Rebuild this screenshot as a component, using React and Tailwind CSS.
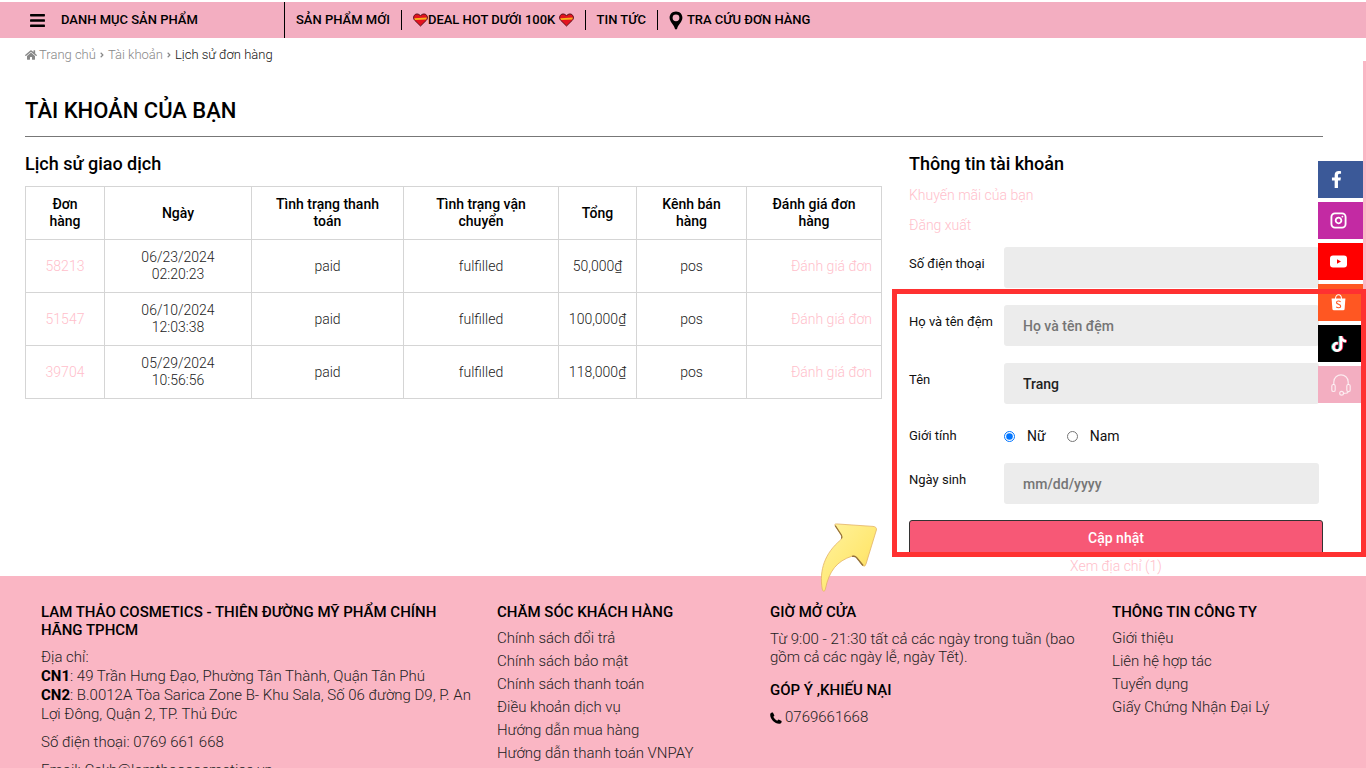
import React, { useState } from 'react';
import { FaBars, FaHome, FaFacebookF, FaTiktok, FaPhoneAlt, FaAngleRight } from 'react-icons/fa';
import { Instagram } from 'lucide-react';

const orders = [
    { id: '58213', date: '06/23/2024', time: '02:20:23', payment: 'paid', shipping: 'fulfilled', total: '50,000₫', channel: 'pos' },
    { id: '51547', date: '06/10/2024', time: '12:03:38', payment: 'paid', shipping: 'fulfilled', total: '100,000₫', channel: 'pos' },
    { id: '39704', date: '05/29/2024', time: '10:56:56', payment: 'paid', shipping: 'fulfilled', total: '118,000₫', channel: 'pos' },
];

const columns = [
    { title: 'Đơn hàng', width: 'w-[79px]' },
    { title: 'Ngày', width: 'w-[147px]' },
    { title: 'Tình trạng thanh toán', width: 'w-[152px]' },
    { title: 'Tình trạng vận chuyển', width: 'w-[155px]' },
    { title: 'Tổng', width: 'w-[78px]' },
    { title: 'Kênh bán hàng', width: 'w-[110px]' },
    { title: 'Đánh giá đơn hàng', width: 'w-[135px]' },
];

const supportLinks = [
    'Chính sách đổi trả',
    'Chính sách bảo mật',
    'Chính sách thanh toán',
    'Điều khoản dịch vụ',
    'Hướng dẫn mua hàng',
    'Hướng dẫn thanh toán VNPAY',
    'Vận chuyển',
];

const companyLinks = ['Giới thiệu', 'Liên hệ hợp tác', 'Tuyển dụng', 'Giấy Chứng Nhận Đại Lý'];

const HeartIcon = () => (
    <svg className="w-[15px] h-[14px]" viewBox="0 0 15 14">
        <path d="M7.5 13 L1.4 7 C-0.4 4.6 1 1 4 1 C5.6 1 6.8 1.8 7.5 3 C8.2 1.8 9.4 1 11 1 C14 1 15.4 4.6 13.6 7 Z" fill="#e3131f" stroke="#5d1019" strokeWidth="1" />
        <path d="M1.2 5.2 L13.8 4.6 L13.4 6.4 L2 7 Z" fill="#f8b21c" />
    </svg>
);

const PinIcon = () => (
    <svg className="w-[14px] h-[19px]" viewBox="0 0 14 19">
        <path fillRule="evenodd" d="M7 0.5 C3 0.5 0.6 3.4 0.6 6.8 C0.6 11 5 13.4 5.8 17.6 Q7 19.4 8.2 17.6 C9 13.4 13.4 11 13.4 6.8 C13.4 3.4 11 0.5 7 0.5 Z M7 3.4 A3.4 3.4 0 1 1 7 10.2 A3.4 3.4 0 1 1 7 3.4 Z" fill="#000" />
    </svg>
);

const YoutubeIcon = () => (
    <svg className="w-[17px] h-[13px]" viewBox="0 0 17 13">
        <rect x="0" y="0.5" width="17" height="12" rx="3" fill="#fff" />
        <path d="M7 4.2 L11 6.5 L7 8.8 Z" fill="#f00" />
    </svg>
);

const ShopeeIcon = () => (
    <svg className="w-[15px] h-[17px]" viewBox="0 0 15 17">
        <path d="M4.5 5 C4.5 -0.6 10.5 -0.6 10.5 5" fill="none" stroke="#fff" strokeWidth="1.1" />
        <path d="M0.6 4.6 H14.4 L13.6 15 Q13.5 16.3 12.2 16.3 H2.8 Q1.5 16.3 1.4 15 Z" fill="#fff" />
        <path d="M9.6 7.8 C8.4 6.6 5.4 6.7 5.5 8.6 C5.6 10.6 9.7 10.1 9.7 12.2 C9.7 14.2 6.5 14.2 5.2 12.9" fill="none" stroke="#ff5722" strokeWidth="1.1" />
    </svg>
);

const TiktokIcon = () => (
    <span className="relative block w-4 h-4">
        <FaTiktok className="absolute -left-px top-0 text-[#25f4ee] opacity-70" size={16} />
        <FaTiktok className="absolute left-px top-0 text-[#fe2c55]" size={16} />
        <FaTiktok className="absolute left-0 top-0 text-white" size={16} />
    </span>
);

const HeadsetIcon = () => (
    <svg className="w-5 h-[22px]" viewBox="0 0 20 22" fill="none" stroke="#fff" strokeOpacity="0.75" strokeWidth="1.2">
        <path d="M2.8 11 V8 C2.8 -1.4 17.2 -1.4 17.2 8 V11" />
        <rect x="0.8" y="10.5" width="3.4" height="7" rx="1.6" />
        <rect x="15.8" y="10.5" width="3.4" height="7" rx="1.6" />
        <path d="M17.2 17.5 C17.2 19.3 15 19.4 12.6 19.4" />
        <circle cx="10.6" cy="19.2" r="1.9" />
    </svg>
);

const socials = [
    { name: 'Facebook', bg: 'bg-[#3b5998] pr-2', icon: <FaFacebookF size={17} /> },
    { name: 'Instagram', bg: 'bg-[#c32aa3] pr-1', icon: <Instagram size={17} strokeWidth={2.6} /> },
    { name: 'Youtube', bg: 'bg-[#ff0000] pr-1', icon: <YoutubeIcon /> },
    { name: 'Shopee', bg: 'bg-[#ff5722] pr-1', icon: <ShopeeIcon /> },
    { name: 'Tiktok', bg: 'bg-black pr-1', icon: <TiktokIcon /> },
    { name: 'Hỗ trợ', bg: 'bg-[#f3aec1]', icon: <HeadsetIcon /> },
];

const Arrow = () => (
    <svg className="absolute z-20 -left-[89px] bottom-[-17px] w-[58px] h-[70px]" viewBox="0 0 58 70">
        <defs>
            <linearGradient id="arrowFill" x1="0" y1="0" x2="1" y2="1">
                <stop offset="0" stopColor="#fff3a0" />
                <stop offset="0.6" stopColor="#ffe873" />
                <stop offset="1" stopColor="#f8d25c" />
            </linearGradient>
        </defs>
        <path
            d="M15 2.4 C14 1 16 0.8 18 1 L53 3.4 Q57 3.8 56.4 7 L46 41 Q45 44.5 42.5 42.5 L36.5 34.5 C35.4 32.8 34 32.6 32 33.2 C17 38 9 48 5.4 66 C4.6 69 3 69 2.2 66 C-1 47 5 30 20.6 17 C22.4 15 22 13.8 21 12 Z"
            fill="url(#arrowFill)"
            stroke="#e3b266"
            strokeWidth="0.8"
        />
        <path d="M15.2 2.6 L21.4 12 Q22.4 14 21.4 15.6" fill="none" stroke="#94713a" strokeWidth="1.2" />
        <path d="M32 33.4 Q35 32.6 36.6 34.6 L43 42.4" fill="none" stroke="#94713a" strokeWidth="1.5" />
    </svg>
);

const Field = ({ id, label, ...props }) => (
    <div className="flex pr-1">
        <label htmlFor={id} className="w-[95px] shrink-0 pt-[7px] text-[13px] leading-5 text-[#111]">{label}</label>
        <input
            id={id}
            className="flex-1 min-w-0 h-[41px] rounded-[3px] bg-[#ececec] px-[19px] text-sm font-medium text-[#222] placeholder:text-[#757575] outline-none"
            {...props}
        />
    </div>
);

const FooterTitle = ({ children }) => (
    <h4 className="text-[15px] leading-[18px] font-medium text-black">{children}</h4>
);

const App = () => {
    const [name, setName] = useState('Trang');
    const [gender, setGender] = useState('female');

    return (
        <div className="min-h-screen overflow-hidden bg-white font-['Roboto',sans-serif] font-normal">
            {/* Top navigation */}
            <header className="mt-0.5 flex h-9 items-center bg-[#f3aec1] text-[13px] font-medium text-black">
                <button type="button" className="flex h-full w-[285px] items-center gap-[15px] border-r border-black pl-[29px]">
                    <FaBars size={17} />
                    DANH MỤC SẢN PHẨM
                </button>
                <nav className="flex items-center">
                    <a href="#new" className="px-[11px]">SẢN PHẨM MỚI</a>
                    <a href="#deal" className="flex items-center border-l border-black px-[11px]">
                        <HeartIcon />
                        DEAL HOT DƯỚI 100K&nbsp;
                        <HeartIcon />
                    </a>
                    <a href="#news" className="border-l border-black px-[11px]">TIN TỨC</a>
                    <a href="#tracking" className="flex items-center gap-1 border-l border-black pl-[11px]">
                        <PinIcon />
                        TRA CỨU ĐƠN HÀNG
                    </a>
                </nav>
            </header>

            <main className="pl-[25px] pr-[43px]">
                <nav className="mt-[7px] flex items-center gap-0.5 text-[13px] leading-5 font-light text-[#888]">
                    <FaHome size={12} />
                    <a href="#home">Trang chủ</a>
                    <FaAngleRight size={8} />
                    <a href="#account">Tài khoản</a>
                    <FaAngleRight size={8} />
                    <span className="text-[#111]">Lịch sử đơn hàng</span>
                </nav>

                <h1 className="mt-[31px] border-b border-[#777] pb-[10px] text-[22px] leading-[30px] font-medium text-black">
                    TÀI KHOẢN CỦA BẠN
                </h1>

                <div className="mt-[15px] grid grid-cols-[856fr_415fr] gap-x-[27px]">
                    {/* Order history */}
                    <section>
                        <h2 className="text-lg leading-6 font-medium text-black">Lịch sử giao dịch</h2>
                        <table className="mt-[10px] w-full table-fixed border-collapse text-center text-sm leading-[17px] text-[#222]">
                            <thead>
                                <tr className="h-[53px]">
                                    {columns.map(col => (
                                        <th key={col.title} className={`border border-[#d5d5d5] px-4 font-medium text-black ${col.width}`}>
                                            {col.title}
                                        </th>
                                    ))}
                                </tr>
                            </thead>
                            <tbody className="font-light">
                                {orders.map(order => (
                                    <tr key={order.id} className="h-[53px]">
                                        <td className="border border-[#d5d5d5]">
                                            <a href={`#${order.id}`} className="text-[#ffc0cb]">{order.id}</a>
                                        </td>
                                        <td className="border border-[#d5d5d5]">{order.date}<br />{order.time}</td>
                                        <td className="border border-[#d5d5d5]">{order.payment}</td>
                                        <td className="border border-[#d5d5d5]">{order.shipping}</td>
                                        <td className="border border-[#d5d5d5]">{order.total}</td>
                                        <td className="border border-[#d5d5d5]">{order.channel}</td>
                                        <td className="border border-[#d5d5d5] pr-[9px] text-right">
                                            <a href={`#review-${order.id}`} className="text-[#ffc0cb]">Đánh giá đơn</a>
                                        </td>
                                    </tr>
                                ))}
                            </tbody>
                        </table>
                    </section>

                    {/* Account form */}
                    <aside className="relative">
                        <h2 className="text-lg leading-6 font-medium text-black">Thông tin tài khoản</h2>
                        <div className="mt-[9px] flex flex-col gap-[10px] text-sm leading-5 font-light text-[#ffc0cb]">
                            <a href="#promotions">Khuyến mãi của bạn</a>
                            <a href="#logout">Đăng xuất</a>
                        </div>

                        <form className="mt-3" onSubmit={(e) => e.preventDefault()}>
                            <div className="flex flex-col gap-[17px]">
                                <Field id="phone" label="Số điện thoại" type="tel" />
                                <Field id="lastName" label="Họ và tên đệm" placeholder="Họ và tên đệm" />
                                <Field id="firstName" label="Tên" value={name} onChange={(e) => setName(e.target.value)} />
                            </div>

                            <fieldset className="mt-5 mb-[15px] flex h-6 items-center text-sm text-[#111]">
                                <legend className="float-left w-[95px] text-[13px] leading-6">Giới tính</legend>
                                <input
                                    id="female"
                                    type="radio"
                                    name="gender"
                                    className="w-[11px] h-[11px]"
                                    checked={gender === 'female'}
                                    onChange={() => setGender('female')}
                                />
                                <label htmlFor="female" className="pl-3 pr-[21px]">Nữ</label>
                                <input
                                    id="male"
                                    type="radio"
                                    name="gender"
                                    className="w-[11px] h-[11px]"
                                    checked={gender === 'male'}
                                    onChange={() => setGender('male')}
                                />
                                <label htmlFor="male" className="pl-3">Nam</label>
                            </fieldset>

                            <Field id="birthday" label="Ngày sinh" placeholder="mm/dd/yyyy" />

                            <button type="submit" className="mt-4 block h-9 w-full rounded-[3px] border border-[#333] bg-[#f75876] text-sm font-medium text-white">
                                Cập nhật
                            </button>
                        </form>
                        <a href="#address" className="block text-center text-sm leading-5 font-light text-[#ffc0cb]">Xem địa chỉ (1)</a>

                        {/* Highlight around the editable fields */}
                        <div className="pointer-events-none absolute z-20 top-[137px] -left-[17px] -right-[43px] bottom-[19px] border-[5px] border-[#ff3131]"></div>
                        <Arrow />
                    </aside>
                </div>
            </main>

            <footer className="grid grid-cols-[456fr_273fr_342fr_254fr] bg-[#fab6c4] pt-[27px] pb-8 pl-[41px] text-[15px] leading-[19px] font-light text-[#222]">
                <div className="pr-6">
                    <FooterTitle>LAM THẢO COSMETICS - THIÊN ĐƯỜNG MỸ PHẨM CHÍNH HÃNG TPHCM</FooterTitle>
                    <p className="mt-[9px]">
                        Địa chỉ:<br />
                        <b className="font-bold text-black">CN1</b>: 49 Trần Hưng Đạo, Phường Tân Thành, Quận Tân Phú<br />
                        <b className="font-bold text-black">CN2</b>: B.0012A Tòa Sarica Zone B- Khu Sala, Số 06 đường D9, P. An Lợi Đông, Quận 2, TP. Thủ Đức
                    </p>
                    <p className="mt-[9px]">Số điện thoại: 0769 661 668</p>
                    <p className="mt-[9px]">Email: Cskh@lamthaocosmetics.vn</p>
                </div>
                <div>
                    <FooterTitle>CHĂM SÓC KHÁCH HÀNG</FooterTitle>
                    <ul className="mt-[6px] leading-[23px]">
                        {supportLinks.map(link => (
                            <li key={link}><a href="#support">{link}</a></li>
                        ))}
                    </ul>
                </div>
                <div className="pr-8">
                    <FooterTitle>GIỜ MỞ CỬA</FooterTitle>
                    <p className="mt-[9px] mb-[15px] leading-[18px]">Từ 9:00 - 21:30 tất cả các ngày trong tuần (bao gồm cả các ngày lễ, ngày Tết).</p>
                    <FooterTitle>GÓP Ý ,KHIẾU NẠI</FooterTitle>
                    <a href="tel:0769661668" className="mt-[9px] flex items-center gap-[3px]">
                        {/* handset with the earpiece at the upper left */}
                        <svg className="w-3 h-3" viewBox="0 0 12 12">
                            <path d="M0.4 1.6 C1 0.6 2 0.3 2.9 0.4 L4.4 3.4 C4.3 4 3.7 4.3 3.3 4.7 C4.2 6.6 5.4 7.8 7.3 8.7 C7.7 8.3 8 7.7 8.6 7.6 L11.6 9.1 C11.7 10 11.4 11 10.4 11.6 C5.6 13 -1 6.4 0.4 1.6 Z" fill="#000" />
                        </svg>
                        0769661668
                    </a>
                </div>
                <div>
                    <FooterTitle>THÔNG TIN CÔNG TY</FooterTitle>
                    <ul className="mt-[6px] leading-[23px]">
                        {companyLinks.map(link => (
                            <li key={link}><a href="#company">{link}</a></li>
                        ))}
                    </ul>
                </div>
            </footer>

            {/* Floating social buttons */}
            <div className="fixed z-10 right-[3px] top-[161px] flex flex-col gap-1">
                {socials.map(item => (
                    <a key={item.name} href="#social" aria-label={item.name} className={`flex h-[37px] w-[45px] items-center justify-center text-white ${item.bg}`}>
                        {item.icon}
                    </a>
                ))}
            </div>
            <div className="fixed right-0 top-[61px] h-[340px] w-[3px] bg-[#fab6c4]"></div>
        </div>
    );
};

export default App;
